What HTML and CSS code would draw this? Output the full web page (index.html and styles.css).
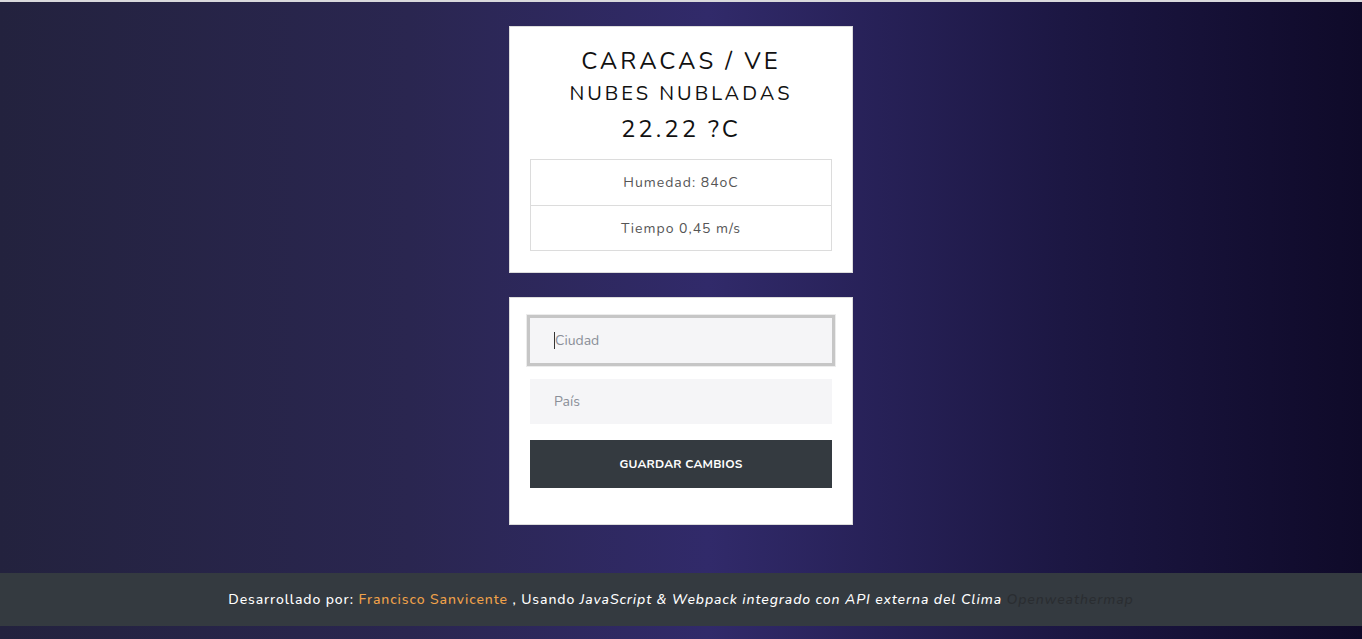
FILE: index.html
```html
<!DOCTYPE html>
<html lang="es">
<head>
<meta charset="utf-8">
<title>Clima</title>
<link rel="stylesheet" href="styles.css">
</head>
<body>
<main class="page">
  <section class="card weather">
    <h1 class="city">CARACAS / VE</h1>
    <h2 class="desc">NUBES NUBLADAS</h2>
    <h3 class="temp">22.22 ?C</h3>
    <ul class="details">
      <li>Humedad: 84oC</li>
      <li>Tiempo 0,45 m/s</li>
    </ul>
  </section>
  <section class="card form">
    <div class="field focused"><span class="caret"></span><span class="ph">Ciudad</span></div>
    <div class="field"><span class="ph">País</span></div>
    <button class="btn">GUARDAR CAMBIOS</button>
  </section>
</main>
<footer class="footer">
  <p>Desarrollado por: <span class="author">Francisco Sanvicente</span> , Usando <em>JavaScript &amp; Webpack integrado con API externa del Clima</em> <em class="api">Openweathermap</em></p>
</footer>
</body>
</html>
```
FILE: styles.css
```css
* { box-sizing: border-box; }
html, body { margin: 0; padding: 0; }
body {
  width: 1362px;
  height: 639px;
  overflow: hidden;
  border-top: 2px solid #d9d9dc;
  background: linear-gradient(90deg, #23223e 0%, #2a2650 30%, #312a6a 52%, #1c1743 78%, #0f0a29 100%);
  font-family: "Nunito", "Lato", "Noto Sans", sans-serif;
}
.page {
  display: flex;
  flex-direction: column;
  align-items: center;
  padding-top: 24px;
  gap: 24px;
  height: 571px;
}
.card {
  width: 344px;
  background: #fff;
  border: 1px solid #dcdcdc;
  padding: 20px 20px;
}
.weather { text-align: center; padding-top: 19px; padding-bottom: 21px; }
.city {
  margin: 0;
  font-size: 24px;
  font-weight: 400;
  letter-spacing: 3px;
  color: #111;
  line-height: 30px;
}
.desc {
  margin: 3px 0 0;
  font-size: 20px;
  font-weight: 400;
  letter-spacing: 3px;
  color: #111;
  line-height: 30px;
}
.temp {
  margin: 2px 0 0;
  font-size: 24px;
  font-weight: 400;
  letter-spacing: 3px;
  color: #111;
  line-height: 36px;
}
.details {
  list-style: none;
  margin: 12px 0 0;
  padding: 0;
  border: 1px solid #dcdcdc;
}
.details li {
  height: 45px;
  line-height: 45px;
  font-size: 14px;
  letter-spacing: 1px;
  color: #555;
}
.details li + li { border-top: 1px solid #dcdcdc; }
.form { display: flex; flex-direction: column; padding-bottom: 36px; }
.field {
  height: 45px;
  background: #f5f5f7;
  display: flex;
  align-items: center;
  padding-left: 24px;
  font-size: 14px;
  color: #8a8f98;
  margin-bottom: 16px;
}
.field.focused {
  box-shadow: 0 0 0 3px #c6c6c6, 0 0 0 4px #ececec;
}
.caret {
  display: inline-block;
  width: 1px;
  height: 17px;
  background: #333;
}
.btn {
  height: 48px;
  border: 0;
  background: #343a40;
  color: #fff;
  font-family: inherit;
  font-size: 12px;
  font-weight: 700;
  letter-spacing: 0.2px;
}
.footer {
  height: 53px;
  background: #343a40;
  display: flex;
  align-items: center;
  justify-content: center;
  color: #fff;
  font-size: 14px;
  font-weight: 500;
  letter-spacing: 0.9px;
}
.footer p { margin: 0; }
.author { color: #f0a24a; }
.api { color: #2a2d31; }
```
